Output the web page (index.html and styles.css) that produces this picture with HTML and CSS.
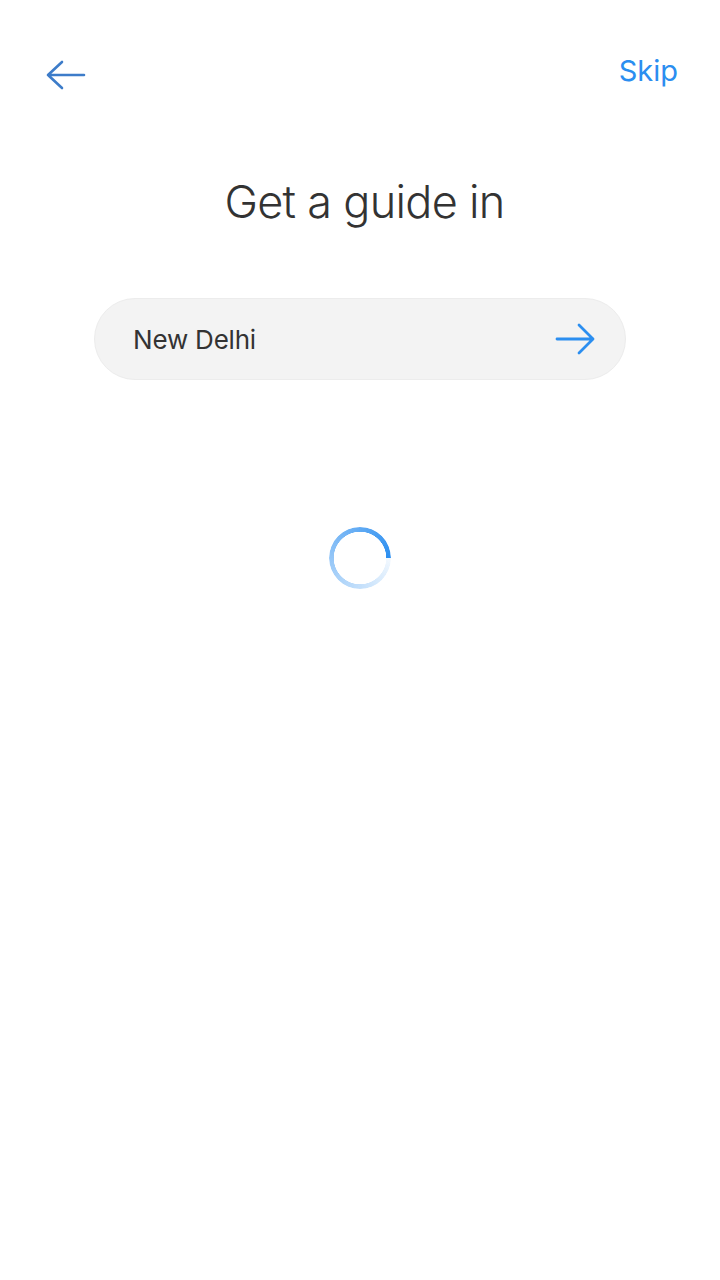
FILE: index.html
```html
<!DOCTYPE html>
<html>
<head>
<meta charset="utf-8">
<link rel="stylesheet" href="styles.css">
</head>
<body>
<div class="screen">
  <header class="topbar">
    <button class="back" aria-label="Back">
      <svg width="40" height="32" viewBox="0 0 40 32"><path d="M38 15H2M16 2L2 15l14 13" fill="none" stroke="#3d7cc9" stroke-width="2.6" stroke-linecap="round" stroke-linejoin="round"/></svg>
    </button>
    <a class="skip">Skip</a>
  </header>
  <h1 class="title">Get a guide in</h1>
  <div class="search">
    <span class="city">New Delhi</span>
    <svg class="go" width="40" height="32" viewBox="0 0 40 32"><path d="M2 16h36M24 2l14 14-14 14" fill="none" stroke="#2b8ef0" stroke-width="2.8" stroke-linecap="round" stroke-linejoin="round"/></svg>
  </div>
  <div class="loader"><div class="spinner"></div></div>
</div>
</body>
</html>
```
FILE: styles.css
```css
html, body { margin: 0; padding: 0; background: #fff; }
body { font-family: Inter, "Noto Sans", sans-serif; width: 720px; height: 1280px; overflow: hidden; }
.screen { display: flex; flex-direction: column; align-items: center; }
.topbar { width: 100%; box-sizing: border-box; display: flex; justify-content: space-between; padding: 50px 42px 0 46px; height: 106px; align-items: flex-start; }
.back { border: 0; background: none; padding: 0; margin-top: 10px; width: 40px; height: 32px; }
.back svg { display: block; }
.skip { color: #2b8ef0; font-size: 29px; font-weight: 400; line-height: 42px; }
.title { margin: 66px 0 0; padding-left: 9px; font-size: 45px; font-weight: 300; color: #333; line-height: 60px; letter-spacing: -0.7px; }
.search { margin-top: 66px; width: 532px; height: 82px; box-sizing: border-box; border: 1px solid #ececec; background: #f3f3f3; border-radius: 41px; display: flex; align-items: center; justify-content: space-between; padding: 0 30px 0 38px; }
.city { font-size: 26px; color: #333; letter-spacing: -0.2px; }
.go { display: block; }
.loader { margin-top: 147px; }
.spinner { width: 62px; height: 62px; border-radius: 50%; background: conic-gradient(from 90deg, rgba(43,142,240,0.06), rgba(43,142,240,0.5) 50%, #2b8ef0); -webkit-mask: radial-gradient(circle, transparent 26px, #000 26.5px); mask: radial-gradient(circle, transparent 26px, #000 26.5px); }
```
